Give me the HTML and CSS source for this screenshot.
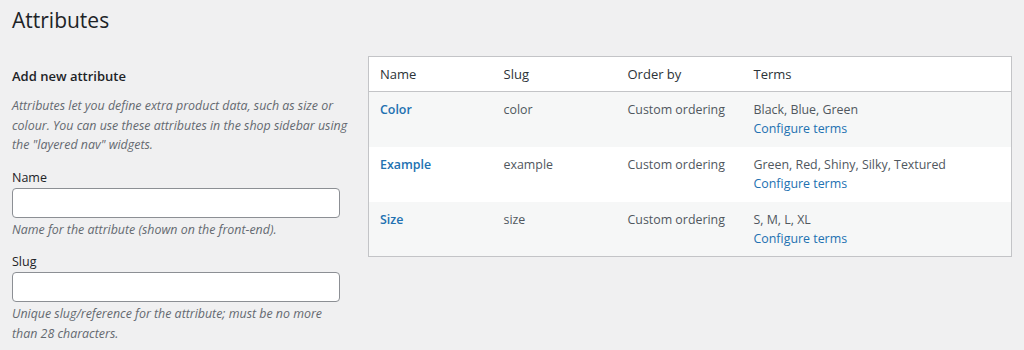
FILE: index.html
```html
<!DOCTYPE html>
<html>
<head>
<meta charset="utf-8">
<link rel="stylesheet" href="styles.css">
</head>
<body>
<div class="wrap">
  <h1 class="title">Attributes</h1>
  <div class="cols">
    <div class="left">
      <h2 class="sub">Add new attribute</h2>
      <p class="desc">Attributes let you define extra product data, such as size or colour. You can use these attributes in the shop sidebar using the "layered nav" widgets.</p>
      <div class="field">
        <label class="lbl">Name</label>
        <input class="inp" type="text">
        <p class="help">Name for the attribute (shown on the front-end).</p>
      </div>
      <div class="field">
        <label class="lbl">Slug</label>
        <input class="inp" type="text">
        <p class="help narrow">Unique slug/reference for the attribute; must be no more than 28 characters.</p>
      </div>
    </div>
    <div class="right">
      <table class="tbl">
        <thead>
          <tr><th class="c1">Name</th><th class="c2">Slug</th><th class="c3">Order by</th><th>Terms</th></tr>
        </thead>
        <tbody>
          <tr class="alt"><td><a class="name">Color</a></td><td>color</td><td>Custom ordering</td><td>Black, Blue, Green<br><a class="cfg">Configure terms</a></td></tr>
          <tr><td><a class="name">Example</a></td><td>example</td><td>Custom ordering</td><td>Green, Red, Shiny, Silky, Textured<br><a class="cfg">Configure terms</a></td></tr>
          <tr class="alt"><td><a class="name">Size</a></td><td>size</td><td>Custom ordering</td><td>S, M, L, XL<br><a class="cfg">Configure terms</a></td></tr>
        </tbody>
      </table>
    </div>
  </div>
</div>
</body>
</html>
```
FILE: styles.css
```css
* { box-sizing: border-box; }
html, body { margin: 0; padding: 0; }
body {
  background: #f0f0f1;
  font-family: "Open Sans", "Noto Sans", sans-serif;
  font-size: 13px;
  color: #3c434a;
  width: 1024px;
  height: 350px;
  overflow: hidden;
}
.wrap { padding: 0 12px; }
.title {
  font-size: 21px;
  font-weight: 400;
  color: #1d2327;
  margin: 0;
  padding: 6px 0 0;
  line-height: 29px;
}
.cols { display: flex; gap: 14px; margin-top: 21px; }
.left { width: 342px; }
.sub {
  font-size: 13px;
  font-weight: 600;
  color: #1d2327;
  margin: 10px 0 0;
  line-height: 20px;
}
.desc {
  font-style: italic;
  color: #646970;
  font-size: 12.4px;
  line-height: 19.5px;
  margin: 10px 0 0;
}
.field { margin-top: 14px; }
.field + .field { margin-top: 14px; }
.lbl { display: block; font-size: 12.5px; line-height: 18px; color: #1d2327; }
.inp {
  display: block;
  width: 328px;
  height: 30px;
  margin-top: 1px;
  border: 1px solid #8c8f94;
  border-radius: 4px;
  background: #fff;
}
.help {
  font-style: italic;
  color: #646970;
  font-size: 12.4px;
  line-height: 19.5px;
  margin: 2px 0 0;
}
.narrow { max-width: 328px; }
.right { flex: 1; }
.tbl {
  width: 644px;
  border-collapse: collapse;
  background: #fff;
  border: 1px solid #c3c4c7;
}
.tbl th {
  text-align: left;
  font-weight: 400;
  font-size: 13px;
  color: #2c3338;
  height: 35px;
  padding: 0 11px;
  border-bottom: 1px solid #c3c4c7;
}
.c1, .c2 { width: 124px; }
.c3 { width: 126px; }
.tbl td {
  vertical-align: top;
  height: 55px;
  padding: 8px 11px 0;
  line-height: 19px;
  color: #50575e;
  font-size: 12.4px;
}
.tbl tr.alt td { background: #f6f7f7; }
.name { color: #2271b1; font-weight: 600; }
.cfg { color: #2271b1; }
```
